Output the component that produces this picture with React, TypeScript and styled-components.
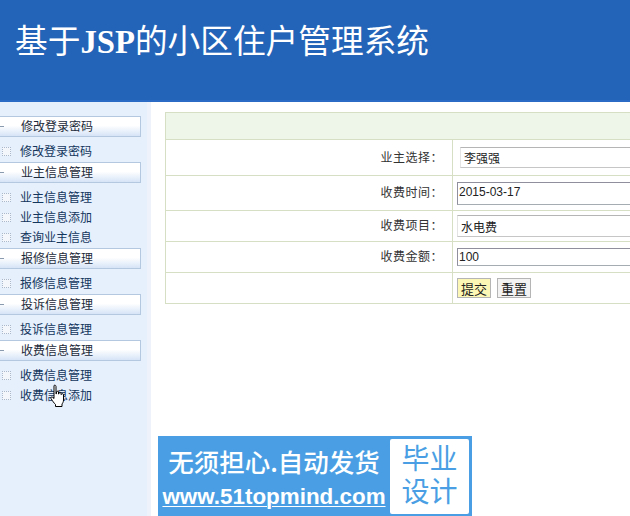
import React from 'react';
import styled, { createGlobalStyle } from 'styled-components';

const GlobalStyle = createGlobalStyle`
  html, body {
    margin: 0;
    padding: 0;
    background: #fff;
  }
  body {
    font-family: "Liberation Sans", "Noto Sans CJK SC", sans-serif;
    font-size: 12px;
    color: #222;
  }
`;

const Page = styled.div`
  position: relative;
  width: 630px;
  height: 516px;
  overflow: hidden;
  display: flex;
  flex-direction: column;
`;

const Header = styled.header`
  height: 102px;
  flex: none;
  box-sizing: border-box;
  padding: 21px 0 0 15px;
  background: #2364b8;
  border-bottom: 2px solid #2b6bc6;
`;

const Title = styled.h1`
  margin: 0;
  font-family: "Liberation Serif", "Noto Sans CJK SC", serif;
  font-size: 32.7px;
  line-height: 42px;
  font-weight: 400;
  color: #fff;
  white-space: nowrap;

  b {
    font-weight: 700;
  }
`;

const Body = styled.div`
  flex: 1;
  display: flex;
  min-height: 0;
`;

const Sidebar = styled.nav`
  width: 151px;
  flex: none;
  box-sizing: border-box;
  padding-top: 14px;
  background: #e6effc;
  border-right: 4px solid #eef3fb;
`;

const MenuHead = styled.div`
  position: relative;
  display: flex;
  align-items: center;
  width: 141px;
  height: 21px;
  box-sizing: border-box;
  padding: 0 0 2px 21px;
  background: linear-gradient(#fff 0%, #fff 45%, #d6e4f7 100%);
  border: 1px solid #b4c8e0;
  border-left: 0;
  font-size: 12px;
  color: #1c2a3a;

  &::before {
    content: '';
    position: absolute;
    left: 0;
    top: 9px;
    width: 4px;
    height: 1px;
    background: #8a9bb0;
  }
`;

const MenuGroup = styled.ul`
  list-style: none;
  margin: 0;
  padding: 4px 0 1px;
`;

const MenuItem = styled.li`
  display: flex;
  align-items: center;
  height: 20px;
  box-sizing: border-box;
  padding: 0 0 2px 2px;
  font-size: 12px;
  color: #12365c;
`;

const ItemIcon = styled.span`
  width: 7px;
  height: 7px;
  margin: 2px 9px 0 0;
  border: 1px dotted #a9b8ca;
  background: #f3f6fb;
`;

const Main = styled.main`
  flex: 1;
  min-width: 0;
  overflow: hidden;
  padding: 10px 0 0 14px;
  display: flex;
  flex-direction: column;
`;

const FormTable = styled.div`
  width: 640px;
  flex: none;
  border-top: 1px solid #d6dfc4;
  border-left: 1px solid #d6dfc4;
`;

const TitleRow = styled.div`
  height: 26px;
  background: #eef6ea;
  border-bottom: 1px solid #d6dfc4;
`;

const Row = styled.div<{ $height: number }>`
  display: grid;
  grid-template-columns: 287px 1fr;
  height: ${(p) => p.$height}px;
  box-sizing: border-box;
  border-bottom: 1px solid #d6dfc4;
`;

const Label = styled.div`
  display: flex;
  align-items: center;
  justify-content: flex-end;
  padding: 0 9px 3px 0;
  border-right: 1px solid #d6dfc4;
  font-size: 12px;
  letter-spacing: 0.5px;
  color: #333;
`;

const Cell = styled.div`
  display: flex;
  align-items: center;
  padding-left: 4px;
  gap: 6px;
`;

const Field = styled.div<{ $height: number; $select?: boolean; $inset?: number; $raised?: boolean }>`
  width: 300px;
  height: ${(p) => p.$height}px;
  margin-left: ${(p) => p.$inset ?? 0}px;
  box-sizing: border-box;
  display: flex;
  align-items: center;
  padding: 0 0 ${(p) => (p.$raised ? 3 : 0)}px ${(p) => (p.$select ? 3 : 1)}px;
  border: 1px solid ${(p) => (p.$select ? '#c6c6c6' : '#a5acb2')};
  border-top-color: ${(p) => (p.$select ? '#b5b5b5' : '#8f8f9d')};
  border-left-color: ${(p) => (p.$select ? '#e4e4e4' : '#8f8f9d')};
  font-size: 12px;
  color: #222;
`;

const FormButton = styled.button<{ $primary?: boolean }>`
  height: 20px;
  margin: 0;
  padding: 0 3px;
  font-family: inherit;
  font-size: 13px;
  color: #222;
  background: ${(p) => (p.$primary ? '#fdf7b5' : '#f3f3f3')};
  border: 1px solid #b5b5b5;
`;

const Banner = styled.div`
  display: flex;
  flex: none;
  width: 314px;
  height: 80px;
  margin: 132px 0 0 -7px;
  box-sizing: border-box;
  padding: 3px 3px 2px 0;
  background: #4a9fe4;
`;

const BannerText = styled.div`
  width: 232px;
  flex: none;
  color: #fff;
  text-align: center;
`;

const Slogan = styled.div`
  font-family: "Noto Sans CJK SC", sans-serif;
  font-size: 25.5px;
  line-height: 40px;
  white-space: nowrap;
  margin-top: 2px;
  font-weight: 500;
`;

const Site = styled.div`
  font-family: "Liberation Sans", sans-serif;
  font-size: 22.4px;
  font-weight: 700;
  line-height: 26px;
  margin-top: 3px;
  text-decoration: underline;
  text-decoration-thickness: 1px;
  text-underline-offset: 2px;
  white-space: nowrap;
`;

const BannerTag = styled.div`
  flex: 1;
  background: #fff;
  border-radius: 2px;
  color: #4a9fe4;
  font-family: "Noto Sans CJK SC", sans-serif;
  padding-top: 2px;
`;

const TagLine = styled.div`
  font-size: 28px;
  line-height: 33px;
  text-align: center;
`;

const HandCursor = styled.svg`
  position: absolute;
  left: 50px;
  top: 384px;
`;

const menus = [
  { head: '修改登录密码', items: ['修改登录密码'] },
  { head: '业主信息管理', items: ['业主信息管理', '业主信息添加', '查询业主信息'] },
  { head: '报修信息管理', items: ['报修信息管理'] },
  { head: '投诉信息管理', items: ['投诉信息管理'] },
  { head: '收费信息管理', items: ['收费信息管理', '收费信息添加'] },
];

export default function App() {
  return (
    <Page>
      <GlobalStyle />
      <Header>
        <Title>
          基于<b>JSP</b>的小区住户管理系统
        </Title>
      </Header>
      <Body>
        <Sidebar>
          {menus.map((menu) => (
            <React.Fragment key={menu.head}>
              <MenuHead>{menu.head}</MenuHead>
              <MenuGroup>
                {menu.items.map((item) => (
                  <MenuItem key={item}>
                    <ItemIcon />
                    {item}
                  </MenuItem>
                ))}
              </MenuGroup>
            </React.Fragment>
          ))}
        </Sidebar>
        <Main>
          <FormTable>
            <TitleRow />
            <Row $height={36}>
              <Label>业主选择：</Label>
              <Cell>
                <Field $height={21} $select $inset={3}>李强强</Field>
              </Cell>
            </Row>
            <Row $height={35}>
              <Label>收费时间：</Label>
              <Cell>
                <Field $height={23} $raised>2015-03-17</Field>
              </Cell>
            </Row>
            <Row $height={31}>
              <Label>收费项目：</Label>
              <Cell>
                <Field $height={22} $select>水电费</Field>
              </Cell>
            </Row>
            <Row $height={31}>
              <Label>收费金额：</Label>
              <Cell>
                <Field $height={18}>100</Field>
              </Cell>
            </Row>
            <Row $height={31}>
              <Label />
              <Cell>
                <FormButton $primary>提交</FormButton>
                <FormButton>重置</FormButton>
              </Cell>
            </Row>
          </FormTable>
          <Banner>
            <BannerText>
              <Slogan>无须担心.自动发货</Slogan>
              <Site>www.51topmind.com</Site>
            </BannerText>
            <BannerTag>
              <TagLine>毕业</TagLine>
              <TagLine>设计</TagLine>
            </BannerTag>
          </Banner>
        </Main>
      </Body>
      <HandCursor width="17" height="24" viewBox="0 0 17 24">
        <path
          d="M4 1.5c1-.8 2 0 2 1V10l.5-.3V8c0-1 2-1 2 0v2l.5-.2V9c0-1 2-1 2 0v1.5l.5-.2c.2-.8 2-.8 2 .3V16c0 2-.8 3-1.500 4v2.500H5.500V20.500C4 19 2.500 17 1 14.500c-.6-1 .6-2.200 1.700-1.200L4 14.500z"
          fill="#fff"
          stroke="#000"
          strokeWidth="1"
          strokeLinejoin="round"
        />
      </HandCursor>
    </Page>
  );
}
